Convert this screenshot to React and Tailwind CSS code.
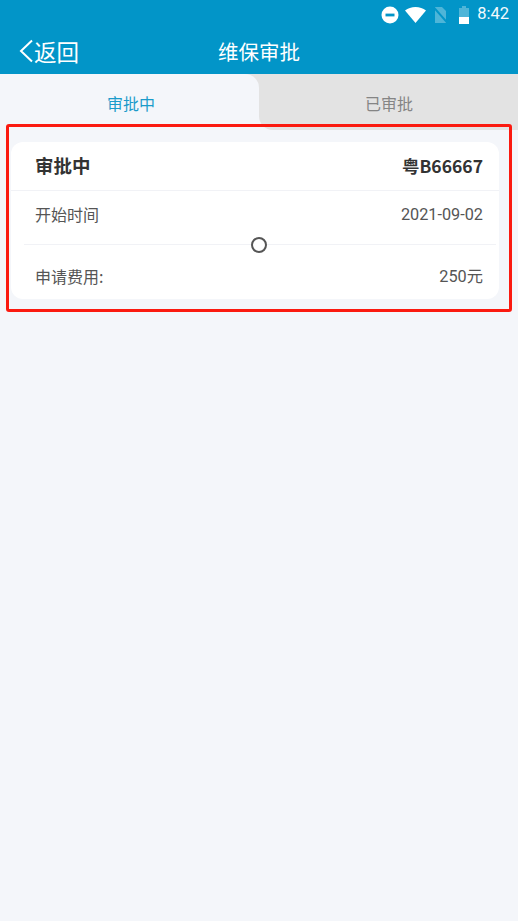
const font = { fontFamily: '"Noto Sans CJK SC"' };

const StatusIcons = () => (
  <div className="flex items-center">
    {/* do not disturb */}
    <svg width="18" height="18" viewBox="0 0 18 18" className="mr-[6px]">
      <circle cx="9" cy="9" r="8.5" fill="#fff" />
      <rect x="4.5" y="7.6" width="9" height="2.8" fill="#0295c8" />
    </svg>
    {/* wifi */}
    <svg width="21" height="16" viewBox="0 0 21 16" className="mr-[7px]">
      <path d="M0 3.5C2.9 1.3 6.5 0 10.5 0S18.100 1.300 21 3.500L10.500 16z" fill="#fff" />
    </svg>
    {/* no sim */}
    <svg width="15" height="18" viewBox="0 0 15 18" className="mr-[10px]">
      <path d="M2 1h7l4 4v12H2z" fill="#fff" fillOpacity="0.3" />
      <path d="M0 0.500L15 17.500" stroke="#0295c8" strokeWidth="2" />
    </svg>
    {/* battery */}
    <svg width="12" height="18" viewBox="0 0 12 18" className="mr-[7px]">
      <path d="M4 0h4v2h3v16H1V2h3z" fill="#fff" fillOpacity="0.3" />
      <rect x="1" y="11" width="10" height="7" fill="#fff" />
    </svg>
    <span className="text-[16.500px] leading-none text-[#f2fafd]" style={{ fontFamily: 'Roboto' }}>8:42</span>
  </div>
);

const Row = ({ label, value }) => (
  <div className="flex items-center justify-between text-[16px] leading-[24px] text-[#555]">
    <span>{label}</span>
    <span className="translate-y-px text-[16.250px]" style={{ fontFamily: 'Roboto, "Noto Sans CJK SC"' }}>{value}</span>
  </div>
);

export default function App() {
  return (
    <div className="relative flex min-h-[921px] flex-col bg-[#f4f6fa]" style={font}>
      {/* Header */}
      <div className="h-[74px] bg-[#0295c8] text-white">
        <div className="flex h-[29px] items-center justify-end pr-[9px]">
          <StatusIcons />
        </div>
        <div className="relative flex h-[45px] items-center justify-center">
          <div className="absolute left-[19px] top-[8px] flex items-center">
            <svg width="14" height="24" viewBox="0 0 14 24" fill="none">
              <path d="M13 1.500L2 12l11 10.500" stroke="#fff" strokeWidth="2" />
            </svg>
            <span className="ml-px text-[22.500px] leading-[28px]">返回</span>
          </div>
          <span className="text-[20.500px] leading-none">维保审批</span>
        </div>
      </div>

      {/* Tabs */}
      <div className="flex h-[56px]">
        <div className="w-[259px] bg-[#e3e3e3]">
          <div className="flex h-full items-center justify-center rounded-tr-[14px] bg-[#f4f6fa] pl-[3px] pt-[2px] text-[16px] text-[#1b9bca]">
            审批中
          </div>
        </div>
        <div className="flex flex-1 items-center justify-center rounded-bl-[14px] bg-[#e3e3e3] pl-px pt-[2px] text-[16px] text-[#858585]">
          已审批
        </div>
      </div>

      {/* Card */}
      <div className="ml-[11px] mt-[12px] w-[488px] rounded-[12px] bg-white">
        <div className="flex h-[49px] items-center justify-between border-b border-[#f1f2f6] pl-[24px] pr-[16px] font-bold text-[#333]">
          <span className="text-[18.500px]">审批中</span>
          <span className="text-[17.500px]">粤B66667</span>
        </div>
        <div className="pl-[24px] pr-[16px] pt-[11px]">
          <Row label="开始时间" value="2021-09-02" />
        </div>
        <div className="relative ml-[13px] mr-[3px] mt-[18px] h-px bg-[#f1f2f6]">
          <span className="absolute left-[227px] top-[-7px] h-[16px] w-[16px] rounded-full border-2 border-[#555] bg-white" />
        </div>
        <div className="pb-[11px] pl-[24px] pr-[16px] pt-[18.500px]">
          <Row label="申请费用:" value="250元" />
        </div>
      </div>

      {/* Red annotation box */}
      <div className="absolute left-[6px] top-[124px] h-[188px] w-[506px] rounded-[3px] border-[3px] border-[#fb1a10]" />
    </div>
  );
}
